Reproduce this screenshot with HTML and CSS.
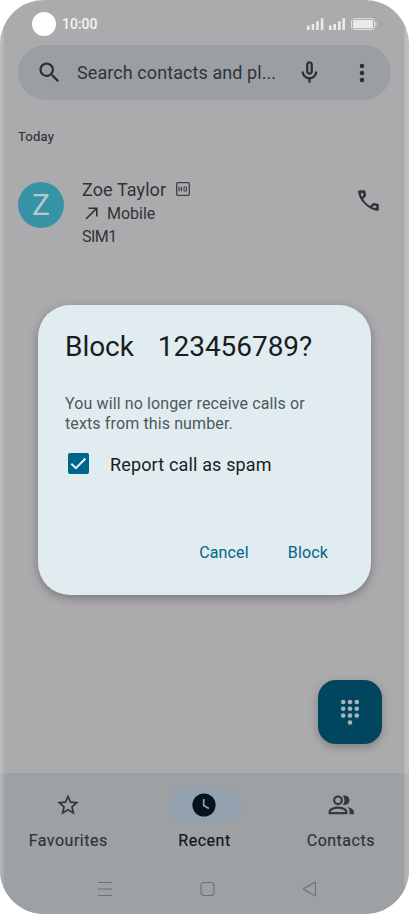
FILE: index.html
```
<!DOCTYPE html>
<html lang="en">

<head>
  <meta charset="UTF-8">
  <title>Phone - block number</title>
  <link rel="stylesheet" href="styles.css">
</head>

<body>
  <div class="phone">
    <div class="status">
      <span class="camera"></span>
      <span class="time">10:00</span>
      <svg class="signals" width="70" height="14" viewBox="0 0 70 14" fill="#ebebeb">
        <path d="M0 7.500h2.600V12H0zM4.600 6h2.600v6H4.600zM9.200 3.200h2.600V12H9.200zM13.800 .3h2.600V12h-2.600z"/>
        <path d="M22 7.500h2.600V12H22zM26.400 6h2.600v6h-2.600zM31 3.200h2.600V12H31zM35.400 .3h2.600V12h-2.600z"/>
        <rect x="44.500" y=".6" width="23" height="11" rx="3" fill="none" stroke="#e0e0e0"/>
        <rect x="46" y="2" width="20" height="8.200" rx="1.500"/>
        <path d="M68.500 4c1.500 .5 1.500 3.500 0 4z"/>
      </svg>
    </div>

    <div class="search">
      <svg class="glass" width="27" height="27" viewBox="0 0 24 24" fill="#2b3034"><path d="M15.500 14h-.79l-.28-.27A6.471 6.471 0 0 0 16 9.500 6.500 6.500 0 1 0 9.500 16c1.610 0 3.090-.59 4.230-1.570l.27.28v.79l5 4.990L20.490 19l-4.990-5zm-6 0C7.010 14 5 11.990 5 9.500S7.010 5 9.500 5 14 7.010 14 9.500 11.990 14 9.500 14z"/></svg>
      <span class="query">Search contacts and pl...</span>
      <svg class="mic" width="27" height="27" viewBox="0 0 24 24" fill="#2b3034"><path d="M12 14c1.660 0 3-1.340 3-3V5c0-1.660-1.340-3-3-3S9 3.340 9 5v6c0 1.660 1.340 3 3 3zm-1-9c0-.55.45-1 1-1s1 .45 1 1v6c0 .55-.45 1-1 1s-1-.45-1-1V5zm6 6c0 2.760-2.240 5-5 5s-5-2.240-5-5H5c0 3.530 2.610 6.430 6 6.920V21h2v-3.080c3.390-.49 6-3.390 6-6.920h-2z"/></svg>
      <svg class="more" width="6" height="20" viewBox="0 0 6 20" fill="#2b3034"><circle cx="3" cy="3" r="2.300"/><circle cx="3" cy="10" r="2.300"/><circle cx="3" cy="17" r="2.300"/></svg>
    </div>

    <div class="day">Today</div>

    <div class="call">
      <div class="avatar">Z</div>
      <div class="details">
        <div class="name"><span class="who">Zoe Taylor</span>
          <svg width="14" height="14" viewBox="0 0 14 14" fill="none" stroke="#3c3f43"><rect x=".7" y=".7" width="12.600" height="12.600" rx="1" stroke-width="1.300"/><path d="M3 4.500v5M5.600 4.500v5M3 7h2.600M8 5v4h2.500V5z" stroke-width="1"/></svg>
        </div>
        <div class="type">
          <svg width="13" height="13" viewBox="0 0 13 13" fill="none" stroke="#2e3236" stroke-width="1.600"><path d="M1 12L11.500 1.500M3.500 1.200h8.300v8.300"/></svg>
          <span class="mobile">Mobile</span>
        </div>
        <div class="sim">SIM1</div>
      </div>
      <svg class="dial" width="27" height="27" viewBox="0 0 24 24" fill="#2b3034" stroke="#2b3034" stroke-width=".3"><path d="M19.950 21c-6.250 0-16.950-9-16.950-16.950Q3 3 4.050 3H8.100q.8 0 .95.750l.65 3.500q.1.600-.25.950L7 10.600q1.400 2.500 3.150 4.100 1.600 1.500 3.300 2.350l2.350-2.350q.4-.4 1-.3l3.450.7q.75.200.75.950v3.900q0 1.050-1.050 1.050zM6.050 9L7.700 7.350 7.250 5H5.020Q5.150 7 6.050 9zM19 18.950v-2.200l-2.350-.48L15 17.950q1.900.8 4 1z"/></svg>
    </div>

    <div class="fab">
      <svg width="20" height="27" viewBox="0 0 20 27" fill="#a6b3ba">
        <circle cx="3.200" cy="3" r="2.300"/><circle cx="10" cy="3" r="2.300"/><circle cx="16.800" cy="3" r="2.300"/>
        <circle cx="3.200" cy="9.800" r="2.300"/><circle cx="10" cy="9.800" r="2.300"/><circle cx="16.800" cy="9.800" r="2.300"/>
        <circle cx="3.200" cy="16.600" r="2.300"/><circle cx="10" cy="16.600" r="2.300"/><circle cx="16.800" cy="16.600" r="2.300"/>
        <circle cx="10" cy="23.500" r="2.300"/>
      </svg>
    </div>

    <div class="bottom">
      <div class="tabs">
        <div class="tab">
          <div class="pill"><svg width="26" height="26" viewBox="0 0 24 24" fill="#34393d"><path d="M22 9.240l-7.190-.62L12 2 9.190 8.630 2 9.240l5.460 4.730L5.820 21 12 17.270 18.180 21l-1.630-7.030L22 9.240zM12 15.400l-3.760 2.270 1-4.280-3.320-2.880 4.380-.38L12 6.100l1.710 4.040 4.380.38-3.320 2.880 1 4.280L12 15.400z"/></svg></div>
          <span class="fav">Favourites</span>
        </div>
        <div class="tab on">
          <div class="pill"><svg width="24" height="24" viewBox="0 0 24 24"><circle cx="12" cy="12" r="11.600" fill="#05141c"/><path d="M11.700 6V12.500l5.200 3.100" fill="none" stroke="#94a2b0" stroke-width="1.700"/></svg></div>
          <span class="rec">Recent</span>
        </div>
        <div class="tab">
          <div class="pill"><svg width="28" height="28" viewBox="0 0 28 28" fill="none" stroke="#34393d" stroke-width="2.200"><circle cx="11" cy="9.300" r="3.800"/><path d="M2.700 22.100v-1.500c0-2.200 4.500-3.900 8.300-3.900s8.300 1.700 8.300 3.900v1.500z"/><path d="M15.800 4.700c3.400-.9 6.700 1.200 6.700 4.600s-3.300 5.500-6.700 4.600c2.200-2.700 2.200-6.500 0-9.200zM20.500 15.900c3.200.8 6.500 2.500 6.500 4.900v2.400h-4.400v-2.400c0-2-.8-3.600-2.100-4.900z" fill="#34393d" stroke="none"/></svg></div>
          <span class="con">Contacts</span>
        </div>
      </div>
      <svg class="sysnav" width="220" height="16" viewBox="0 0 220 16" fill="none" stroke="#6d7074" stroke-width="1.100">
        <path d="M1 1.500h14M1 8h14M1 14.500h14"/>
        <rect x="104" y="1.500" width="13" height="13" rx="3"/>
        <path d="M218.500 1.800v12.400q0 .8-.8.400L206.800 8.500q-.7-.5 0-1l10.900-6.100q.8-.4.8.4z"/>
      </svg>
    </div>

    <div class="dialog">
      <div class="title"><span class="verb">Block</span><span class="number">123456789?</span></div>
      <p class="message"><span class="line1">You will no longer receive calls or</span><br><span class="line2">texts from this number.</span></p>
      <div class="check">
        <svg width="21" height="21" viewBox="0 0 21 21"><rect width="21" height="21" rx="2" fill="#00658a"/><path d="M3.300 10.700l4.600 4.500 9.500-9.700" fill="none" stroke="#e6f3f8" stroke-width="2"/></svg>
        <span class="spam">Report call as spam</span>
      </div>
      <div class="actions"><span class="cancel">Cancel</span><span class="block">Block</span></div>
    </div>
  </div>
</body>

</html>
```
FILE: styles.css
```
body {
  margin: 0;
  background: #fff;
  font-family: Roboto, "Liberation Sans", sans-serif;
  color: #303438;
}
svg {
  display: block;
  flex: none;
}
span {
  white-space: nowrap;
}
.phone {
  position: relative;
  display: flex;
  flex-direction: column;
  width: 409px;
  height: 914px;
  border-radius: 44px;
  overflow: hidden;
  background: #ababad;
}
.phone::after {
  content: "";
  position: absolute;
  inset: 0;
  background: linear-gradient(90deg, rgba(255, 255, 255, .22) 0, rgba(255, 255, 255, .14) 3px, transparent 5px, transparent 404px, rgba(255, 255, 255, .2) 405px, rgba(255, 255, 255, .2) 409px);
}
.status {
  display: flex;
  align-items: center;
  height: 45px;
  padding: 2px 32px 0 32px;
  box-sizing: border-box;
}
.camera {
  width: 24px;
  height: 24px;
  border-radius: 50%;
  background: #fff;
}
.time {
  margin-left: 6px;
  padding-top: 1px;
  color: #f4f4f4;
  font-size: 14px;
  font-weight: 500;
}
.signals {
  margin: 2px 0 0 auto;
}
.search {
  display: flex;
  align-items: center;
  height: 55px;
  margin: 0 18px;
  padding-left: 18px;
  border-radius: 28px;
  background: #9a9fa3;
}
.query {
  width: 200px;
  margin-left: 14px;
  font-size: 18px;
  letter-spacing: .08px;
}
.mic {
  margin-left: 18.5px;
}
.more {
  margin-left: 36px;
}
.day {
  margin: 29px 0 0 18px;
  font-size: 13px;
  letter-spacing: .2px;
  line-height: 16px;
  -webkit-text-stroke: .2px;
}
.call {
  display: flex;
  margin: 33px 27px 0 18px;
}
.avatar {
  width: 46px;
  height: 46px;
  margin-top: 4px;
  border-radius: 50%;
  background: #3593a5;
  color: #b7c7cb;
  font-size: 30px;
  line-height: 46px;
  text-align: center;
}
.details {
  margin-left: 18px;
}
.name {
  display: flex;
  align-items: center;
  gap: 10px;
  height: 22px;
  font-size: 18px;
  letter-spacing: .1px;
}
.type {
  display: flex;
  align-items: center;
  gap: 9px;
  height: 26px;
  padding-left: 3px;
  font-size: 16px;
}
.sim {
  font-size: 16px;
  letter-spacing: -.5px;
  line-height: 21px;
}
.dial {
  margin: 9px 0 0 auto;
}
.fab {
  display: flex;
  justify-content: center;
  align-items: center;
  width: 64px;
  height: 64px;
  margin: auto 27px 29px auto;
  border-radius: 18px;
  background: #00465f;
  box-shadow: 0 3px 8px rgba(0, 0, 0, .25);
}
.bottom {
  height: 141px;
  background: #9da1a4;
}
.tabs {
  display: flex;
  height: 108px;
}
.tab {
  display: flex;
  flex: 1;
  flex-direction: column;
  align-items: center;
  padding-top: 14px;
  font-size: 16px;
  letter-spacing: .5px;
  -webkit-text-stroke: .2px;
}
.tab span {
  margin-top: 8px;
}
.pill {
  display: flex;
  justify-content: center;
  align-items: center;
  width: 73px;
  height: 36px;
  border-radius: 18px;
}
.on .pill {
  background: #94a2b0;
}
.on {
  color: #121619;
}
.sysnav {
  margin-left: 97px;
}
.dialog {
  position: absolute;
  left: 38px;
  top: 305px;
  width: 333px;
  height: 290px;
  padding: 25px 27px;
  box-sizing: border-box;
  border-radius: 32px;
  background: #e1ecf1;
  box-shadow: 0 3px 10px rgba(0, 0, 0, .3);
  color: #1a1d20;
}
.title {
  display: flex;
  gap: 24px;
  font-size: 28px;
  letter-spacing: -.05px;
  line-height: 34px;
}
.message {
  margin: 30px 0 0;
  color: #50575b;
  font-size: 16px;
  letter-spacing: .12px;
  line-height: 20px;
}
.check {
  display: flex;
  align-items: center;
  gap: 21px;
  margin: 18px 0 0 3px;
  font-size: 18px;
  letter-spacing: .15px;
}
.spam {
  padding-top: 2px;
}
.actions {
  display: flex;
  justify-content: flex-end;
  gap: 39px;
  margin: 68px 16px 0 0;
  color: #00658a;
  font-size: 16px;
  letter-spacing: .15px;
  line-height: 20px;
}
```
